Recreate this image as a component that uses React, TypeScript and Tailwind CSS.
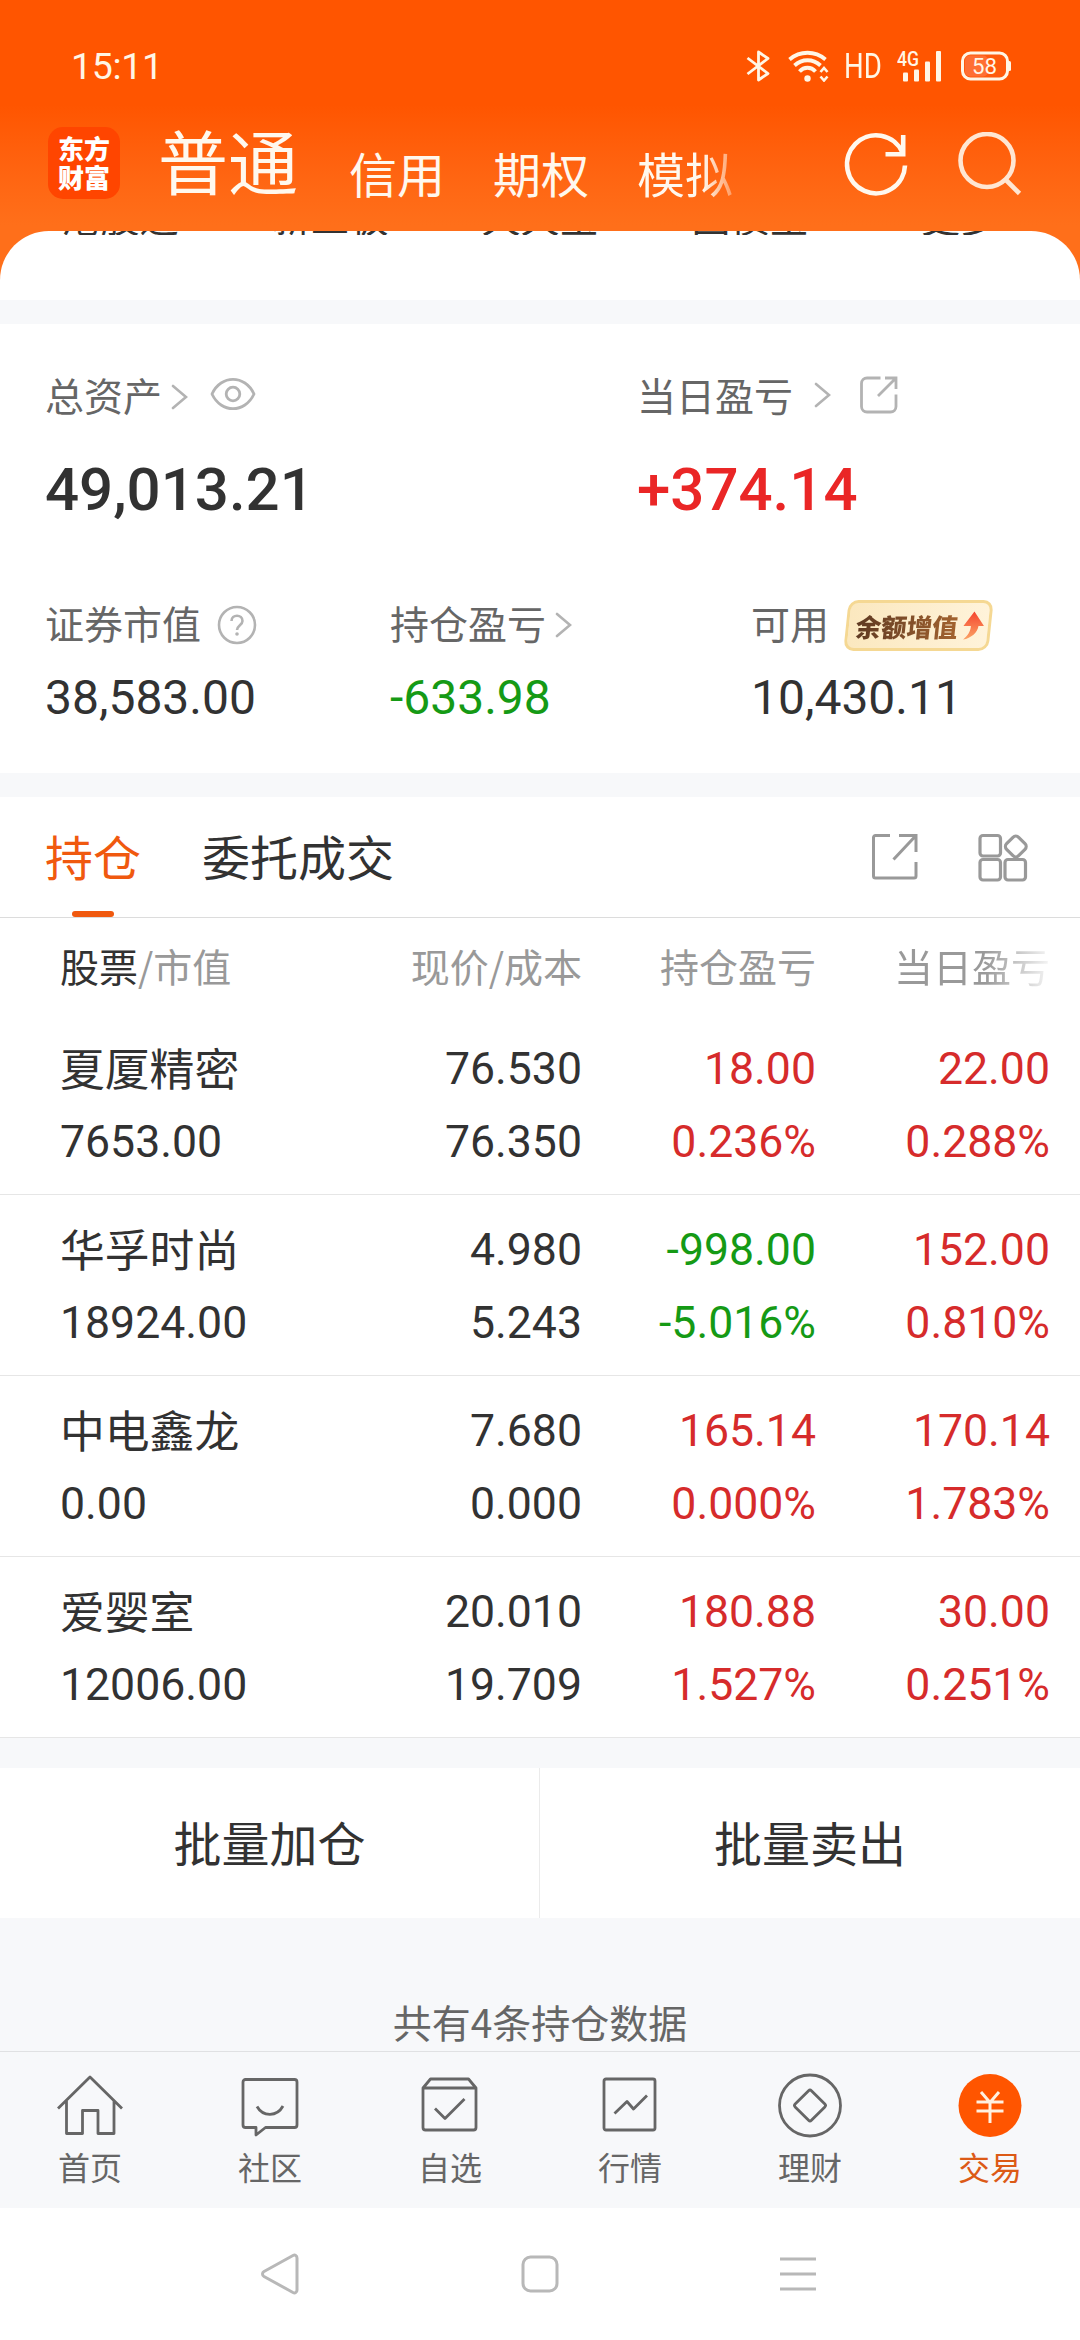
import React from "react";

const CJK = "font-['Noto_Sans_CJK_SC',sans-serif]";
const NUM = "font-['Roboto',sans-serif]";

const RED = "text-[#d62b2b]";
const GREEN = "text-[#159a15]";
const DARK = "text-[#323232]";

type Holding = {
  name: string;
  value: string;
  price: string;
  cost: string;
  profit: string;
  profitRate: string;
  profitColor: string;
  day: string;
  dayRate: string;
};

const holdings: Holding[] = [
  { name: "夏厦精密", value: "7653.00", price: "76.530", cost: "76.350", profit: "18.00", profitRate: "0.236%", profitColor: RED, day: "22.00", dayRate: "0.288%" },
  { name: "华孚时尚", value: "18924.00", price: "4.980", cost: "5.243", profit: "-998.00", profitRate: "-5.016%", profitColor: GREEN, day: "152.00", dayRate: "0.810%" },
  { name: "中电鑫龙", value: "0.00", price: "7.680", cost: "0.000", profit: "165.14", profitRate: "0.000%", profitColor: RED, day: "170.14", dayRate: "1.783%" },
  { name: "爱婴室", value: "12006.00", price: "20.010", cost: "19.709", profit: "180.88", profitRate: "1.527%", profitColor: RED, day: "30.00", dayRate: "0.251%" },
];

const shortcuts = ["港股通", "新三板", "天天宝", "国债宝", "更多"];

function StatusBar() {
  return (
    <div className={`flex h-[132px] items-center pl-[71px] pr-[68px] text-[#fff6e6] ${NUM}`}>
      <span className="text-[37.500px] leading-[48px] tracking-[-0.3px]">15:11</span>
      <div className="ml-auto flex h-[32px] items-center">
        <svg width="24" height="32" viewBox="0 0 24 32" fill="none" stroke="currentColor" strokeWidth="2.8" strokeLinejoin="round">
          <path d="M1.500 8 22 23.500 12.500 30V2L22 8.500 1.500 24" />
        </svg>
        <svg className="ml-[18px]" width="42" height="32" viewBox="0 0 42 32" fill="none" stroke="currentColor" strokeWidth="3.8">
          <path d="M1.500 9.500C12 .5 27 .5 37.500 9.500" />
          <path d="M6.500 15.500C14 8.500 25 8.500 32.500 15.500" />
          <path d="M11.500 21.500C16 16.500 23 16.500 27.500 21.500" />
          <circle cx="19.500" cy="28.500" r="3.200" fill="currentColor" stroke="none" />
          <path d="M32.500 22 36 18l3.500 4M32.500 26.500 36 30.500l3.500-4" strokeWidth="2.600" />
        </svg>
        <span className="ml-[14px] h-[40px] w-[38px] origin-left scale-x-[0.8] text-[34.500px] leading-[40px]">HD</span>
        <svg className="ml-[15px]" width="48" height="32" viewBox="0 0 48 32" fill="currentColor">
          <text x="0" y="16" fontSize="20.500" fontFamily="Roboto" fontWeight="500" textLength="22" lengthAdjust="spacingAndGlyphs">4G</text>
          <rect x="6" y="22.500" width="5" height="9" rx="1" />
          <rect x="17" y="19.500" width="5" height="12" rx="1" />
          <rect x="28" y="11.500" width="5" height="20" rx="1" />
          <rect x="39" y="1" width="5" height="30.500" rx="1" />
        </svg>
        <svg className="ml-[15px]" width="52" height="32" viewBox="0 0 52 32" fill="none">
          <rect x="2.500" y="3" width="45" height="26" rx="8" fill="#ff5a0c" stroke="currentColor" strokeWidth="3" />
          <rect x="5" y="5.500" width="23" height="21" rx="5" fill="#ff6f33" />
          <rect x="48" y="11" width="3" height="10" rx="1.500" fill="currentColor" />
          <text x="12" y="23.500" fontSize="21.500" fontFamily="Roboto" fill="currentColor" textLength="25" lengthAdjust="spacingAndGlyphs">58</text>
        </svg>
      </div>
    </div>
  );
}

function Header() {
  return (
    <header className="h-[231px]">
      <StatusBar />
      <div className={`flex h-[99px] items-start pl-[48px] pr-[58px] text-[#fff8ee] ${CJK}`}>
        <div className="-mt-[5px] flex h-[72px] w-[72px] flex-col items-center justify-center rounded-[15px] bg-[#ff4500] pb-[2px] text-[26px] font-black leading-[29px] text-white">
          <span>东方</span>
          <span>财富</span>
        </div>
        <span className="-mt-[12px] ml-[38px] text-[70px] leading-[80px]">普通</span>
        <div className="ml-[51px] flex gap-[48px] text-[48px] leading-[56px]">
          <span className="mt-[12px]">信用</span>
          <span className="mt-[12px]">期权</span>
          <span className="mt-[12px] bg-linear-to-r from-[#fff8ee] from-68% to-[#ff9a60] bg-clip-text text-transparent">模拟</span>
        </div>
        <svg className="ml-auto" width="66" height="66" viewBox="0 0 66 66" fill="none" stroke="currentColor" strokeWidth="4.600">
          <path d="M63 33.500A29 29 0 1 1 60.500 20.500" />
          <path d="M61.200 3v19.200H43.500" />
        </svg>
        <svg className="ml-[48px]" width="66" height="66" viewBox="0 0 66 66" fill="none" stroke="#ffe6d2" strokeWidth="4.600">
          <circle cx="31" cy="28.500" r="26.500" />
          <path d="m49 47 14.500 14.500" />
        </svg>
      </div>
    </header>
  );
}

function Chevron({ className = "" }: { className?: string }) {
  return (
    <svg className={className} width="17" height="26" viewBox="0 0 17 26" fill="none" stroke="#b3b3b3" strokeWidth="2.600" strokeLinecap="round">
      <path d="M2 2l13 11L2 24" />
    </svg>
  );
}

function Assets() {
  return (
    <section className={`h-[449px] bg-white pt-[46px] text-[#666] ${CJK}`}>
      <div className="grid grid-cols-[592px_1fr] pl-[45px]">
        <div>
          <div className="flex h-[48px] items-center text-[39px] leading-[48px]">
            <span>总资产</span>
            <Chevron className="ml-[9px] mt-[6px]" />
            <svg className="ml-[22px]" width="46" height="34" viewBox="0 0 46 34" fill="none" stroke="#b3b3b3" strokeWidth="2.800">
              <path d="M2 17C11-2.500 35-2.500 44 17 35 36.500 11 36.500 2 17Z" strokeLinejoin="round" />
              <circle cx="23" cy="17" r="6.800" />
            </svg>
          </div>
          <div className={`mt-[36px] text-[60px] font-medium leading-[72px] ${DARK} ${NUM}`}>49,013.21</div>
        </div>
        <div>
          <div className="flex h-[48px] items-center text-[39px] leading-[48px]">
            <span>当日盈亏</span>
            <Chevron className="ml-[21px] mt-[2px]" />
            <svg className="ml-[28px] mt-[2px]" width="40" height="40" viewBox="0 0 40 40" fill="none" stroke="#b3b3b3" strokeWidth="2.800">
              <path d="M21.500 3H8a5.500 5.500 0 0 0-5.500 5.500v23A5.500 5.500 0 0 0 8 37h23.500a5.500 5.500 0 0 0 5.500-5.500V19.500" />
              <path d="M26 3h11v11M37 3 19 21" />
            </svg>
          </div>
          <div className={`mt-[36px] text-[60px] font-medium leading-[72px] text-[#ea2626] ${NUM}`}>+374.14</div>
        </div>
      </div>
      <div className="mt-[72px] grid grid-cols-[345px_361px_1fr] pl-[45px]">
        <div>
          <div className="flex h-[48px] items-center text-[39px] leading-[48px]">
            <span>证券市值</span>
            <svg className="ml-[16px] mt-[6px]" width="40" height="40" viewBox="0 0 40 40" fill="none" stroke="#b3b3b3" strokeWidth="2.600">
              <circle cx="20" cy="20" r="18" />
              <path d="M14.500 16c0-7 11-7 11 0 0 4-5.500 4.500-5.500 9" />
              <circle cx="20" cy="29" r="1.800" fill="#b3b3b3" stroke="none" />
            </svg>
          </div>
          <div className={`mt-[22px] text-[48px] leading-[60px] ${DARK} ${NUM}`}>38,583.00</div>
        </div>
        <div>
          <div className="flex h-[48px] items-center text-[39px] leading-[48px]">
            <span>持仓盈亏</span>
            <Chevron className="ml-[9px] mt-[6px]" />
          </div>
          <div className={`mt-[22px] text-[48px] leading-[60px] ${GREEN} ${NUM}`}>-633.98</div>
        </div>
        <div>
          <div className="flex h-[48px] items-center text-[39px] leading-[48px]">
            <span>可用</span>
            <div className="ml-[17px] mt-[6px] flex h-[51px] w-[145px] -skew-x-6 items-center rounded-[10px] border-3 border-[#f5d893] bg-linear-to-r from-[#fbe8bf] to-[#fff3da] pl-[7px]">
              <span className="bg-linear-to-r from-[#5f3a22] to-[#a5642f] bg-clip-text pr-[2px] text-[25.500px] font-black leading-[40px] text-transparent">余额增值</span>
              <svg width="26" height="32" viewBox="0 0 26 32">
                <defs>
                  <linearGradient id="rise" x1="0" y1="0" x2="0" y2="1">
                    <stop offset="0" stopColor="#f5452f" />
                    <stop offset="1" stopColor="#fba264" />
                  </linearGradient>
                </defs>
                <path d="M13 1.500l11 14.500h-5.500c0 6-6 12.500-14 13.500 4.500-4 6.500-7.500 6.500-13.500H3.500Z" fill="url(#rise)" />
              </svg>
            </div>
          </div>
          <div className={`mt-[22px] text-[48px] leading-[60px] ${DARK} ${NUM}`}>10,430.11</div>
        </div>
      </div>
    </section>
  );
}

function Tabs() {
  return (
    <div className={`flex h-[121px] items-start border-b border-[#dcdcdc] bg-white pl-[45px] text-[48px] leading-[60px] ${CJK}`}>
      <div className="flex h-[120px] flex-col items-center pt-[28px] text-[#f0590f]">
        <span>持仓</span>
        <span className="mt-auto h-[6px] w-[42px] rounded-full bg-[#f0590f]" />
      </div>
      <span className={`ml-[61px] mt-[28px] ${DARK}`}>委托成交</span>
      <svg className="ml-auto mt-[36px]" width="48" height="48" viewBox="0 0 48 48" fill="none" stroke="#999" strokeWidth="3">
        <path d="M19 2.500H4.500a2 2 0 0 0-2 2V43a2 2 0 0 0 2 2H43a2 2 0 0 0 2-2V29" />
        <path d="M28 2.500h17V19M45 2.500 22.500 26.500" />
      </svg>
      <svg className="ml-[59px] mr-[51px] mt-[36px]" width="51" height="50" viewBox="0 0 51 50" fill="none" stroke="#999" strokeWidth="3.200">
        <rect x="2" y="2.500" width="20.500" height="20.500" rx="3" />
        <rect x="2" y="26.500" width="20.500" height="20.500" rx="3" />
        <rect x="27" y="26.500" width="20.500" height="20.500" rx="3" />
        <rect x="29.300" y="5" width="17" height="17" rx="4" transform="rotate(45 37.800 13.500)" />
      </svg>
    </div>
  );
}

function Cell({ top, bottom, color }: { top: string; bottom: string; color: string }) {
  return (
    <div className={`flex flex-col items-end text-[44.600px] leading-[73px] ${color} ${NUM}`}>
      <span>{top}</span>
      <span>{bottom}</span>
    </div>
  );
}

function Holdings() {
  return (
    <section className="bg-white">
      <div className={`grid h-[96px] grid-cols-[522px_234px_234px] pl-[60px] pt-[20px] text-[39px] leading-[54px] text-[#999] ${CJK}`}>
        <div className="flex justify-between">
          <span>
            <span className={DARK}>股票</span>/市值
          </span>
          <span>现价/成本</span>
        </div>
        <span className="text-right">持仓盈亏</span>
        <span className="justify-self-end bg-linear-to-r from-[#999] from-58% to-[#f6f6f6] bg-clip-text text-transparent">当日盈亏</span>
      </div>
      {holdings.map((h) => (
        <div key={h.name} className="grid h-[181px] grid-cols-[260px_262px_234px_234px] border-b border-[#e6e6e6] pl-[60px] pt-[19px]">
          <div className={`flex flex-col text-[44.800px] leading-[73px] ${DARK}`}>
            <span className={`-mt-[3px] ${CJK}`}>{h.name}</span>
            <span className={`mt-[3px] text-[44.600px] ${NUM}`}>{h.value}</span>
          </div>
          <Cell top={h.price} bottom={h.cost} color={DARK} />
          <Cell top={h.profit} bottom={h.profitRate} color={h.profitColor} />
          <Cell top={h.day} bottom={h.dayRate} color={RED} />
        </div>
      ))}
    </section>
  );
}

const navItems = [
  {
    label: "首页",
    icon: <path d="M2 36.500 34 5l32 31.500M10.500 29v32.500h16V38.500h15.500v23h16V29" />,
  },
  {
    label: "社区",
    icon: (
      <>
        <path d="M9.500 7.500h49a2.500 2.500 0 0 1 2.500 2.500v43a2.500 2.500 0 0 1-2.500 2.500H29.500L20 63V55.500H9.500A2.500 2.500 0 0 1 7 53V10a2.500 2.500 0 0 1 2.500-2.500Z" />
        <path d="M21 34.500C27 45 41 45 47 34" />
      </>
    ),
  },
  {
    label: "自选",
    icon: (
      <>
        <path d="M7 16v39.500a2.500 2.500 0 0 0 2.500 2.500h48a2.500 2.500 0 0 0 2.500-2.500V16M7 16h53L52.500 7h-38Z" />
        <path d="M19 36.500 29 46.500 48.500 27" />
      </>
    ),
  },
  {
    label: "行情",
    icon: (
      <>
        <rect x="8" y="7" width="51" height="51" rx="2" />
        <path d="M18.500 41.500 31 29.500l6.500 7.500 13.500-13.500" />
      </>
    ),
  },
  {
    label: "理财",
    icon: (
      <>
        <circle cx="34" cy="33.500" r="30.500" />
        <rect x="22.500" y="22" width="23" height="23" rx="2" transform="rotate(45 34 33.500)" />
      </>
    ),
  },
];

function BottomNav() {
  return (
    <nav className={`grid h-[157px] grid-cols-6 border-t border-[#e0e1e3] bg-[#f7f8fa] text-[32px] leading-[40px] text-[#666] ${CJK}`}>
      {navItems.map((n) => (
        <div key={n.label} className="flex flex-col items-center pt-[20px]">
          <svg width="68" height="68" viewBox="0 0 68 68" fill="none" stroke="#666" strokeWidth="2.800" strokeLinejoin="round">
            {n.icon}
          </svg>
          <span className="mt-[6px]">{n.label}</span>
        </div>
      ))}
      <div className="flex flex-col items-center pt-[20px] text-[#dc5a16]">
        <svg width="68" height="68" viewBox="0 0 68 68">
          <circle cx="34" cy="33.500" r="31.500" fill="#ff5500" />
          <path d="M25 20l9 10.500L43 20M34 30.500V51M20.500 30h27M20.500 39h27" fill="none" stroke="#fff0e0" strokeWidth="3" />
        </svg>
        <span className="mt-[6px]">交易</span>
      </div>
    </nav>
  );
}

function SystemNav() {
  return (
    <div className="flex h-[132px] items-center justify-center gap-[218px] bg-white">
      <svg width="44" height="44" viewBox="0 0 44 44" fill="none" stroke="#b8b8b8" strokeWidth="3" strokeLinejoin="round">
        <path d="M5 19.500 34 3.500c2-1 4 0 4 2.500v32c0 2.500-2 3.500-4 2.500L5 24.500c-2-1.200-2-3.800 0-5Z" />
      </svg>
      <svg width="38" height="38" viewBox="0 0 38 38" fill="none" stroke="#b8b8b8" strokeWidth="3">
        <rect x="2" y="2" width="34" height="34" rx="7.500" />
      </svg>
      <svg width="44" height="44" viewBox="0 0 44 44" fill="none" stroke="#b8b8b8" strokeWidth="3">
        <path d="M3 7h36M3 22h36M3 37h36" />
      </svg>
    </div>
  );
}

export default function App() {
  return (
    <div className="h-[2340px] w-[1080px] overflow-hidden bg-[#f7f8fa]">
      <div className="h-[300px] bg-linear-to-b from-[#ff5500] from-35% to-[#ff6f1a] to-75%">
        <Header />
        <div className="h-[69px] rounded-t-[49px] bg-white">
          <div className={`flex h-[4px] items-end overflow-hidden px-[15px] text-[39px] leading-[40px] ${DARK} ${CJK}`}>
            {shortcuts.map((s) => (
              <span key={s} className="w-[210px] text-center">
                {s}
              </span>
            ))}
          </div>
        </div>
      </div>
      <div className="h-[24px]" />
      <Assets />
      <div className="h-[24px]" />
      <Tabs />
      <Holdings />
      <div className="h-[30px]" />
      <div className={`flex h-[150px] bg-white text-center text-[48px] leading-[146px] ${DARK} ${CJK}`}>
        <div className="w-[540px] border-r border-[#ebebeb]">批量加仓</div>
        <div className="w-[540px]">批量卖出</div>
      </div>
      <div className={`h-[133px] pt-[79px] text-center text-[39px] leading-[48px] text-[#666] ${CJK}`}>共有4条持仓数据</div>
      <BottomNav />
      <SystemNav />
    </div>
  );
}
